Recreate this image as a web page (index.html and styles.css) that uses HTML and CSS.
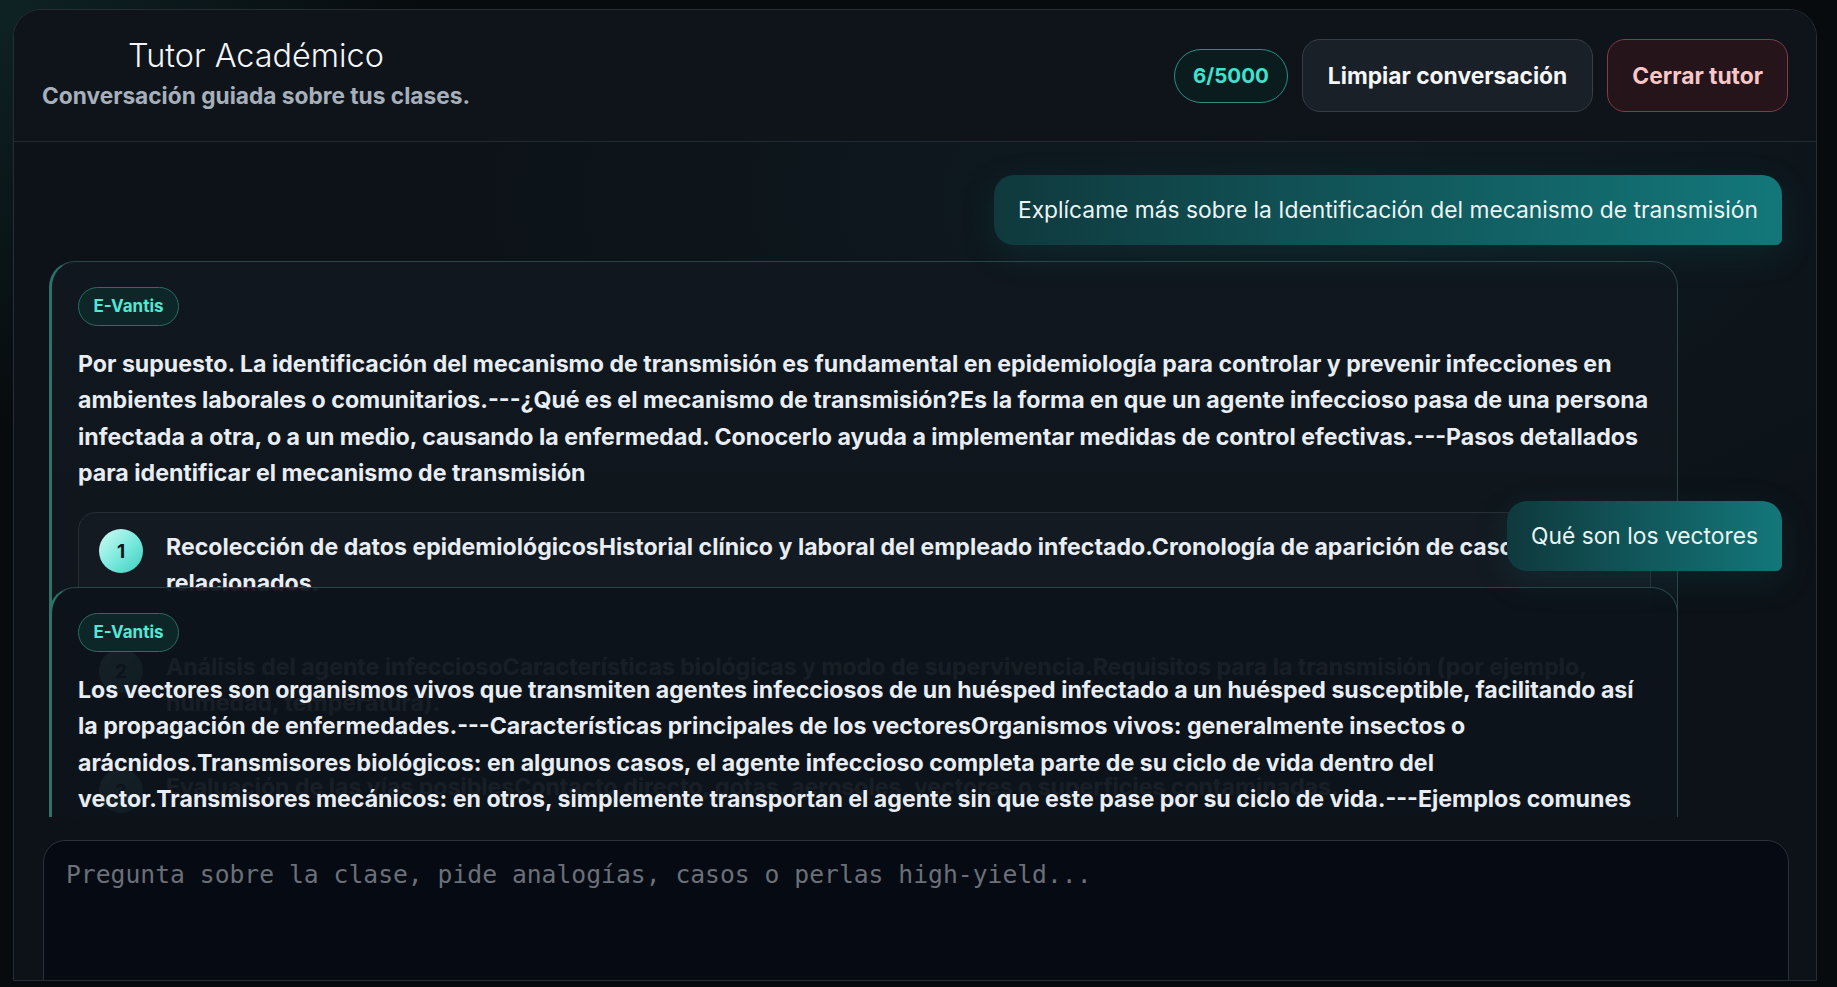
FILE: index.html
```html
<!DOCTYPE html>
<html lang="es">
  <head>
    <meta charset="UTF-8" />
    <meta name="viewport" content="width=device-width, initial-scale=1.0" />
    <title>Tutor Académico</title>
    <link rel="stylesheet" href="styles.css">
  </head>
  <body>
    <div class="tutor">
      <!-- cabecera -->
      <header class="tutor-head">
        <div class="head-text">
          <h1>Tutor Académico</h1>
          <p>Conversación guiada sobre tus clases.</p>
        </div>
        <div class="head-actions">
          <span class="counter">6/5000</span>
          <button class="btn btn-clear" type="button">Limpiar conversación</button>
          <button class="btn btn-close" type="button">Cerrar tutor</button>
        </div>
      </header>

      <!-- mensajes -->
      <main class="chat">
        <div class="msg-user">Explícame más sobre la Identificación del mecanismo de transmisión</div>

        <div class="msg-bot">
          <span class="tag">E-Vantis</span>
          <p>Por supuesto. La identificación del mecanismo de transmisión es fundamental en epidemiología para controlar y prevenir infecciones en ambientes laborales o comunitarios.---¿Qué es el mecanismo de transmisión?Es la forma en que un agente infeccioso pasa de una persona infectada a otra, o a un medio, causando la enfermedad. Conocerlo ayuda a implementar medidas de control efectivas.---Pasos detallados para identificar el mecanismo de transmisión</p>
          <ol class="steps">
            <li><span class="num">1</span><span class="step-text">Recolección de datos epidemiológicosHistorial clínico y laboral del empleado infectado.Cronología de aparición de casos relacionados.</span></li>
            <li><span class="num">2</span><span class="step-text">Análisis del agente infecciosoCaracterísticas biológicas y modo de supervivencia.Requisitos para la transmisión (por ejemplo, humedad, temperatura).</span></li>
            <li><span class="num">3</span><span class="step-text">Evaluación de las vías posiblesContacto directo, gotas, aerosoles, vectores o superficies contaminadas.</span></li>
          </ol>
        </div>

        <!-- los mensajes nuevos quedan encima del anterior -->
        <div class="later">
          <div class="msg-user">Qué son los vectores</div>
          <div class="msg-bot msg-front">
            <span class="tag">E-Vantis</span>
            <p>Los vectores son organismos vivos que transmiten agentes infecciosos de un huésped infectado a un huésped susceptible, facilitando así la propagación de enfermedades.---Características principales de los vectoresOrganismos vivos: generalmente insectos o arácnidos.Transmisores biológicos: en algunos casos, el agente infeccioso completa parte de su ciclo de vida dentro del vector.Transmisores mecánicos: en otros, simplemente transportan el agente sin que este pase por su ciclo de vida.---Ejemplos comunes</p>
          </div>
        </div>
      </main>

      <!-- caja de texto -->
      <footer class="composer">
        <textarea placeholder="Pregunta sobre la clase, pide analogías, casos o perlas high-yield..."></textarea>
      </footer>
    </div>
  </body>
</html>
```

FILE: styles.css
```css
* {
  box-sizing: border-box;
}

body {
  margin: 0;
  height: 987px;
  overflow: hidden;
  background: radial-gradient(circle at 0 0, #0e2224 0, #070b0e 420px) #05080b;
  font-family: Inter, "Noto Sans", sans-serif;
  color: #e8edf3;
}

.tutor {
  margin: 9px 20px 0 13px;
  height: 972px;
  border: 1px solid #272e37;
  border-radius: 28px 28px 0 0;
  background: #0c1218;
  display: flex;
  flex-direction: column;
  overflow: hidden;
}

/* cabecera */
.tutor-head {
  flex: none;
  height: 132px;
  display: flex;
  align-items: center;
  justify-content: space-between;
  padding: 0 28px;
  border-bottom: 1px solid #222a32;
  background: #0e141a;
}

.head-text {
  text-align: center;
  margin-bottom: 5px;
}

.head-text h1 {
  margin: 0;
  font-size: 32.4px;
  line-height: 40px;
  font-weight: 300;
  color: #f3f5f7;
}

.head-text p {
  margin: 6px 0 0;
  font-size: 22.7px;
  line-height: 28px;
  font-weight: 700;
  color: #a6afba;
}

.head-actions {
  display: flex;
  align-items: center;
  gap: 14px;
}

.counter {
  height: 54px;
  display: flex;
  align-items: center;
  padding: 0 18px;
  border: 1.5px solid #2a8d84;
  border-radius: 999px;
  background: #0b1c1f;
  color: #40e2cf;
  font-size: 20.5px;
  font-weight: 700;
}

.btn {
  height: 73px;
  padding: 0 25px;
  border-radius: 18px;
  font-family: inherit;
  font-size: 22.8px;
  font-weight: 700;
  cursor: pointer;
}

.btn-clear {
  background: #1a2027;
  border: 1px solid #363e48;
  color: #f4f6f8;
}

.btn-close {
  padding: 0 24px;
  background: #25141a;
  border: 1.5px solid #853c44;
  color: #f8c7c7;
}

/* mensajes */
.chat {
  flex: 1;
  position: relative;
  overflow: hidden;
  display: flex;
  flex-direction: column;
  align-items: flex-start;
  gap: 16px;
  padding: 33px 34px 0 35px;
  background: radial-gradient(ellipse at 70% 8%, rgba(24, 70, 74, 0.18), transparent 45%) #0c1218;
}

.msg-user {
  align-self: flex-end;
  padding: 20px 24px;
  border-radius: 20px 20px 6px 20px;
  background: linear-gradient(90deg, #0f393d 0%, #13777a 100%);
  box-shadow: 0 10px 34px rgba(20, 110, 112, 0.18);
  color: #e9f5f4;
  font-size: 22.8px;
  line-height: 30px;
  font-weight: 400;
  position: relative;
  z-index: 2;
}

.msg-bot {
  width: 94%;
  flex: none;
  padding: 25px 26px 0 26px;
  border: 1px solid #294547;
  border-left: 3px solid #2e706a;
  border-radius: 26px 26px 0 0;
  background: linear-gradient(180deg, #10171e, #0e151b);
}

.tag {
  display: inline-block;
  height: 39px;
  line-height: 37px;
  padding: 0 14.5px;
  border: 1px solid #2b6c67;
  border-radius: 999px;
  background: #0d2628;
  color: #55e6d5;
  font-size: 17px;
  font-weight: 700;
}

.msg-bot p {
  margin: 20px 0 0;
  font-size: 23.15px;
  line-height: 36.3px;
  font-weight: 700;
  color: #e8edf3;
}

.steps {
  list-style: none;
  margin: 21px 0 0;
  padding: 0;
  display: flex;
  flex-direction: column;
  gap: 14px;
}

.steps li {
  display: flex;
  align-items: flex-start;
  gap: 23px;
  padding: 16px 20px;
  border: 1px solid #262e37;
  border-radius: 18px;
  background: #131a21;
}

.num {
  flex: none;
  width: 44px;
  height: 44px;
  border-radius: 50%;
  display: flex;
  align-items: center;
  justify-content: center;
  background: linear-gradient(135deg, #d2fcf6 0%, #78e8dc 55%, #3ccdbe 100%);
  color: #0a1618;
  font-size: 19px;
  font-weight: 700;
}

.step-text {
  font-size: 23.1px;
  line-height: 36px;
  font-weight: 700;
  color: #e8edf3;
}

.later {
  position: absolute;
  top: 359px;
  left: 35px;
  right: 34px;
  display: flex;
  flex-direction: column;
  align-items: flex-start;
  gap: 16px;
  z-index: 3;
}

.msg-front {
  height: 400px;
  background: rgba(13, 19, 26, 0.95);
}

/* caja de texto */
.composer {
  flex: none;
  height: 163px;
  overflow: hidden;
  padding: 23px 27px 0 29px;
  background: #0c1218;
}

.composer textarea {
  display: block;
  width: 100%;
  height: 220px;
  resize: none;
  padding: 18px 22px;
  border: 1px solid #2a313b;
  border-radius: 22px;
  background: #060a12;
  color: #d0d6dd;
  font-family: "DejaVu Sans Mono", monospace;
  font-size: 24.7px;
  line-height: 32px;
  outline: none;
}

.composer textarea::placeholder {
  color: #6b7078;
}
```
